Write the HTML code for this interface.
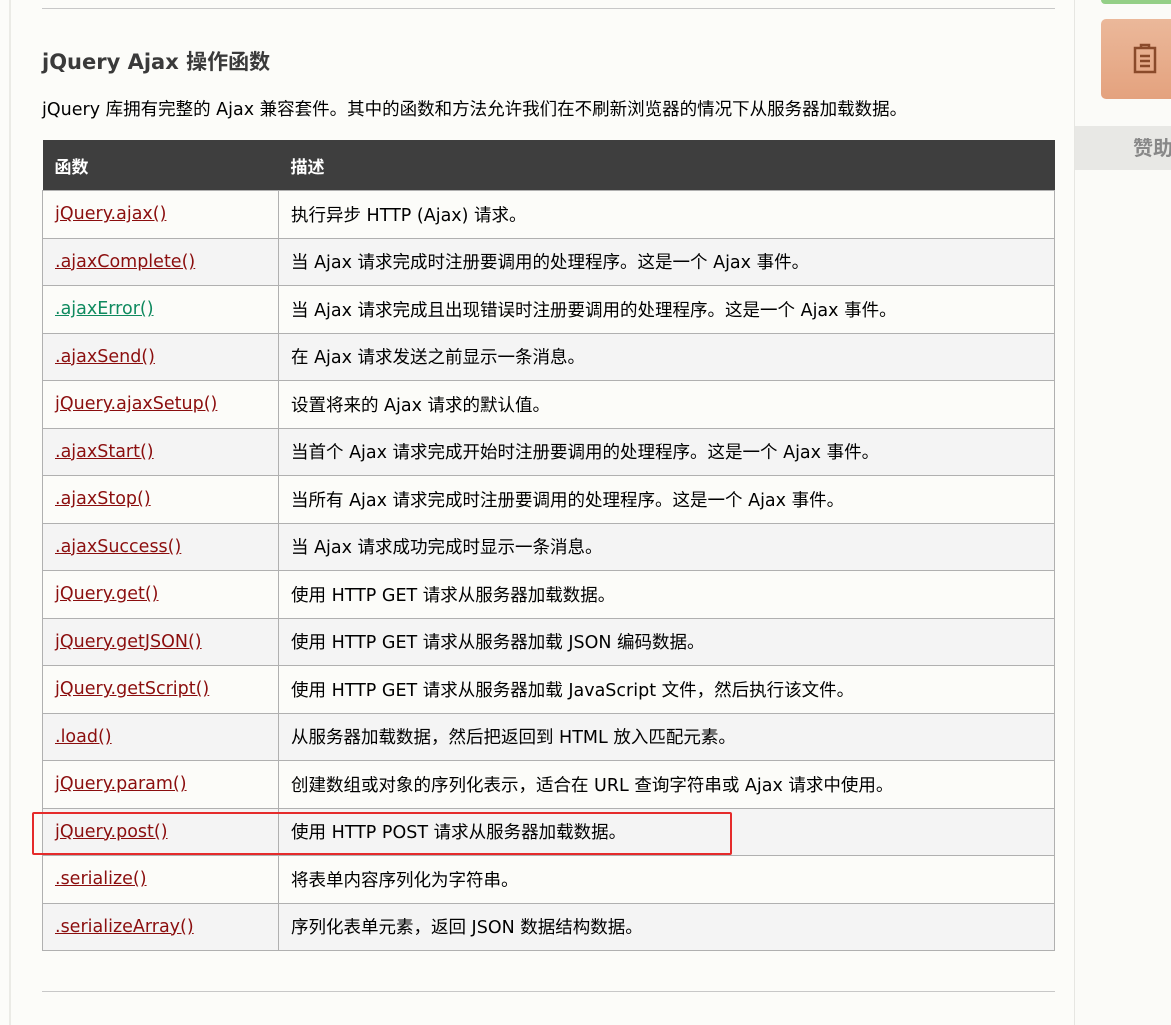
<!DOCTYPE html>
<html><head><meta charset="utf-8"><style>
body{margin:0;width:1171px;height:1025px;background:#fcfcf9;font-family:"DejaVu Sans","Noto Sans CJK SC",sans-serif;position:relative;overflow:hidden;color:#000}
.lb{position:absolute;left:9px;top:0;width:2px;height:1025px;background:#ebebe6}
.hr{position:absolute;left:42px;width:1013px;height:1px;background:#c8c8c8}
h2{position:absolute;left:42px;top:46px;margin:0;font-size:21px;font-weight:bold;color:#3a3a3a;white-space:nowrap}
p{position:absolute;left:42px;top:96px;margin:0;font-size:17.5px;white-space:nowrap}
table{position:absolute;left:42px;top:140px;width:1013px;border-collapse:collapse;font-size:17.5px}
th{background:#3e3e3e;color:#fff;text-align:left;height:50px;padding:0 0 0 12px;font-weight:bold;font-size:17px}
td{height:46.5px;border:1px solid #b0b0b0;padding:0 0 0 12px;vertical-align:middle;white-space:nowrap}
tr:nth-child(odd) td{background:#f4f4f4}
td:first-child{width:223px}
a{color:#8b0e0e;text-decoration:underline}
.sb{position:absolute;left:1074px;top:0;width:97px;height:1025px;background:#fbfbf8;border-left:1px solid #e6e6e2;overflow:hidden}
.red{position:absolute;left:32px;top:812px;width:696px;height:39px;border:2px solid #e52b2b;border-radius:2px}
</style></head><body>
<div class="lb"></div>
<div class="hr" style="top:8px"></div>
<h2>jQuery Ajax 操作函数</h2>
<p>jQuery 库拥有完整的 Ajax 兼容套件。其中的函数和方法允许我们在不刷新浏览器的情况下从服务器加载数据。</p>
<table>
<tr><th>函数</th><th>描述</th></tr>
<tr><td><a>jQuery.ajax()</a></td><td>执行异步 HTTP (Ajax) 请求。</td></tr>
<tr><td><a>.ajaxComplete()</a></td><td>当 Ajax 请求完成时注册要调用的处理程序。这是一个 Ajax 事件。</td></tr>
<tr><td><a style="color:#0f8a5f">.ajaxError()</a></td><td>当 Ajax 请求完成且出现错误时注册要调用的处理程序。这是一个 Ajax 事件。</td></tr>
<tr><td><a>.ajaxSend()</a></td><td>在 Ajax 请求发送之前显示一条消息。</td></tr>
<tr><td><a>jQuery.ajaxSetup()</a></td><td>设置将来的 Ajax 请求的默认值。</td></tr>
<tr><td><a>.ajaxStart()</a></td><td>当首个 Ajax 请求完成开始时注册要调用的处理程序。这是一个 Ajax 事件。</td></tr>
<tr><td><a>.ajaxStop()</a></td><td>当所有 Ajax 请求完成时注册要调用的处理程序。这是一个 Ajax 事件。</td></tr>
<tr><td><a>.ajaxSuccess()</a></td><td>当 Ajax 请求成功完成时显示一条消息。</td></tr>
<tr><td><a>jQuery.get()</a></td><td>使用 HTTP GET 请求从服务器加载数据。</td></tr>
<tr><td><a>jQuery.getJSON()</a></td><td>使用 HTTP GET 请求从服务器加载 JSON 编码数据。</td></tr>
<tr><td><a>jQuery.getScript()</a></td><td>使用 HTTP GET 请求从服务器加载 JavaScript 文件，然后执行该文件。</td></tr>
<tr><td><a>.load()</a></td><td>从服务器加载数据，然后把返回到 HTML 放入匹配元素。</td></tr>
<tr><td><a>jQuery.param()</a></td><td>创建数组或对象的序列化表示，适合在 URL 查询字符串或 Ajax 请求中使用。</td></tr>
<tr><td><a>jQuery.post()</a></td><td>使用 HTTP POST 请求从服务器加载数据。</td></tr>
<tr><td><a>.serialize()</a></td><td>将表单内容序列化为字符串。</td></tr>
<tr><td><a>.serializeArray()</a></td><td>序列化表单元素，返回 JSON 数据结构数据。</td></tr>
</table>
<div class="red"></div>
<div class="hr" style="top:991px"></div>
<div class="sb">
<div style="position:absolute;left:26px;top:0;width:80px;height:4px;background:#94cf87;border-radius:0 0 4px 4px"></div>
<div style="position:absolute;left:26px;top:19px;width:80px;height:80px;background:linear-gradient(#ebb89a,#e4a27e);border-radius:5px">
<svg style="position:absolute;left:32px;top:24px" width="26" height="32" viewBox="0 0 26 32" fill="none" stroke="#8a4a2a" stroke-width="2.5"><rect x="2" y="5" width="20" height="24"/><path d="M8 5V2h8v3M7 13h10M7 18h10M7 23h10"/></svg></div>
<div style="position:absolute;left:0;top:126px;width:97px;height:44px;background:#e8e8e5;color:#888;font-size:20px;line-height:44px;padding-left:58px;font-weight:bold;box-sizing:border-box;white-space:nowrap">赞助</div>
</div>
</body></html>
